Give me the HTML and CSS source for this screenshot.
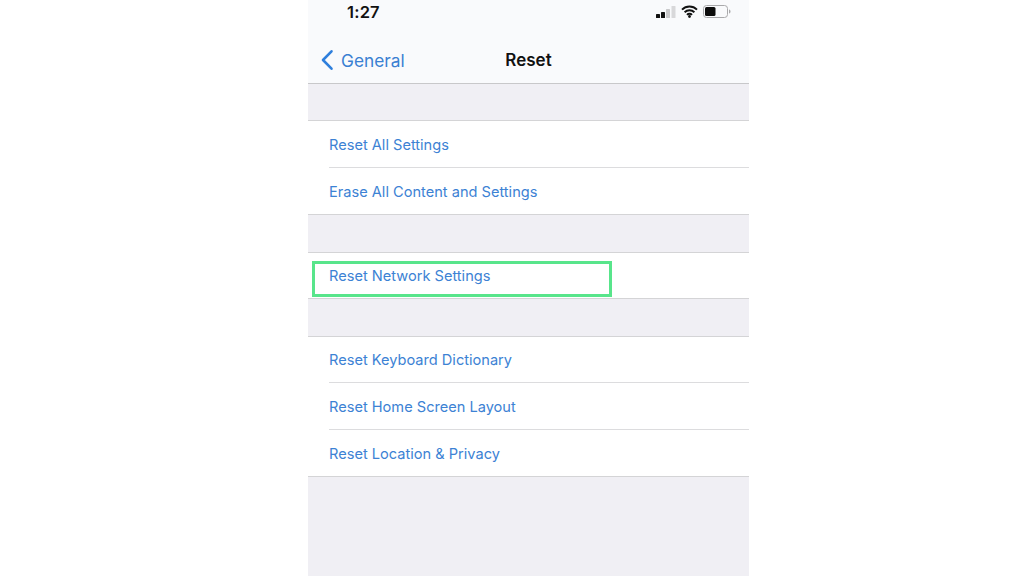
FILE: index.html
```html
<!DOCTYPE html>
<html lang="en">
<head>
<meta charset="utf-8">
<title>Reset</title>
<link rel="stylesheet" href="styles.css">
</head>
<body>
<main class="phone">
  <header class="top">
    <div class="status">
      <span class="time">1:27</span>
      <div class="status-icons">
        <svg class="signal" width="20" height="12" viewBox="0 0 20 12"><rect x="0" y="8" width="4" height="4" rx=".6" fill="#111"/><rect x="5" y="6" width="4" height="6" rx=".6" fill="#111"/><rect x="10" y="3" width="4" height="9" rx=".6" fill="#c9c9cb"/><rect x="15.500" y="0" width="4" height="12" rx=".6" fill="#d8d8da"/></svg>
        <svg class="wifi" width="17" height="13" viewBox="0 0 17 13"><path d="M1 4.600a10.600 10.600 0 0 1 15 0M3.600 7.300a7 7 0 0 1 9.800 0M6 9.800a3.400 3.400 0 0 1 5 0" fill="none" stroke="#111" stroke-width="1.900"/><circle cx="8.500" cy="11.500" r="1.400" fill="#111"/></svg>
        <svg class="battery" width="28" height="13" viewBox="0 0 28 13"><rect x=".5" y=".5" width="24" height="12" rx="3" fill="none" stroke="#a9a9ab"/><rect x="2" y="2" width="10.500" height="9" rx="1.500" fill="#0c0c0c"/><path d="M26 4.500c1 .3 1.500 1 1.500 2s-.5 1.700-1.500 2z" fill="#a9a9ab"/></svg>
      </div>
    </div>
    <nav class="nav">
      <a class="back">
        <svg width="14" height="21" viewBox="0 0 14 21"><path d="M11.500 1.800 3 10.500l8.500 8.700" fill="none" stroke="#2f7fdc" stroke-width="2.600" stroke-linecap="round" stroke-linejoin="round"/></svg>
        <span>General</span>
      </a>
      <h1 class="title">Reset</h1>
    </nav>
  </header>

  <section class="group first">
    <div class="row">Reset All Settings</div>
    <div class="row">Erase All Content and Settings</div>
  </section>
  <section class="group single">
    <div class="row">Reset Network Settings</div>
    <span class="highlight"></span>
  </section>
  <section class="group third">
    <div class="row">Reset Keyboard Dictionary</div>
    <div class="row">Reset Home Screen Layout</div>
    <div class="row">Reset Location &amp; Privacy</div>
  </section>
</main>
</body>
</html>
```
FILE: styles.css
```css
html, body {
  margin: 0;
  height: 100%;
  background: #fff;
  overflow: hidden;
}
body {
  display: flex;
  justify-content: flex-start;
  font-family: Inter, "Liberation Sans", sans-serif;
}
.phone {
  width: 441px;
  height: 576px;
  margin-left: 308px;
  background: #f0eff4;
  display: flex;
  flex-direction: column;
}
.top {
  height: 83px;
  background: #f9fafc;
  border-bottom: 1px solid #c8c8ca;
  flex: none;
}
.status {
  height: 23px;
  display: flex;
  justify-content: space-between;
  align-items: center;
  padding: 0 18px 0 39px;
}
.time {
  font-size: 16.500px;
  font-weight: 600;
  color: #111;
  letter-spacing: .2px;
}
.status-icons {
  display: flex;
  align-items: center;
  gap: 5px;
}
.nav {
  position: relative;
  height: 48px;
  margin-top: 13px;
  display: flex;
  align-items: center;
  justify-content: center;
}
.back {
  position: absolute;
  left: 12px;
  top: 50%;
  transform: translateY(-50%);
  display: flex;
  align-items: center;
  gap: 7px;
  color: #3a80d2;
  font-size: 17.300px;
}
.title {
  margin: 0;
  font-size: 17px;
  font-weight: 600;
  color: #111;
}
.group {
  position: relative;
  background: #fff;
  border-top: 1px solid #d4d4d6;
  border-bottom: 1px solid #d4d4d6;
  padding-left: 21px;
}
.group.first { margin-top: 36px; }
.group.single { margin-top: 37px; }
.group.third { margin-top: 37px; }
.row {
  height: 45px;
  padding-top: 1px;
  display: flex;
  align-items: center;
  font-size: 14.600px;
  color: #3c82d4;
  border-bottom: 1px solid #dcdcde;
}
.row:last-of-type { border-bottom: 0; }
.group.single .row { padding-top: 0; }
.group.third .row:first-child { height: 44px; }
.highlight {
  position: absolute;
  left: 4px;
  top: 8px;
  width: 300px;
  height: 36px;
  box-sizing: border-box;
  border: 3px solid #58e58b;
  pointer-events: none;
}
```
